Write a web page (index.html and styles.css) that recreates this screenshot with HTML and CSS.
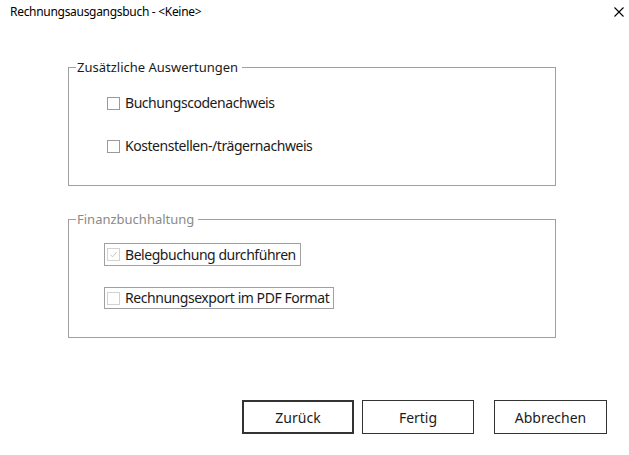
FILE: index.html
```html
<!DOCTYPE html>
<html lang="de">
<head>
<meta charset="utf-8">
<title>Rechnungsausgangsbuch</title>
<link rel="stylesheet" href="styles.css">
</head>
<body>
<div class="dialog">
  <div class="titlebar">
    <span class="title">Rechnungsausgangsbuch - &lt;Keine&gt;</span>
    <svg class="close" width="10" height="10" viewBox="0 0 10 10"><path d="M0.5 0.5L9.5 9.5M9.5 0.5L0.5 9.5" stroke="#000" stroke-width="1.1" fill="none"/></svg>
  </div>
  <div class="content">
    <fieldset class="group group-first">
      <legend class="legend">Zusätzliche Auswertungen</legend>
      <div class="row"><span class="box"></span><span class="label">Buchungscodenachweis</span></div>
      <div class="row"><span class="box"></span><span class="label">Kostenstellen-/trägernachweis</span></div>
    </fieldset>
    <fieldset class="group group-second">
      <legend class="legend legend-disabled">Finanzbuchhaltung</legend>
      <div class="row row-framed"><span class="box box-disabled"><svg width="11" height="11" viewBox="0 0 11 11"><path d="M2.5 5.8L4.6 7.8L8.6 3.2" stroke="#c4c4c4" stroke-width="1" fill="none"/></svg></span><span class="label">Belegbuchung durchführen</span></div>
      <div class="row row-framed row-short"><span class="box box-disabled"></span><span class="label">Rechnungsexport im PDF Format</span></div>
    </fieldset>
  </div>
  <div class="buttons">
    <button class="btn btn-default">Zurück</button>
    <button class="btn">Fertig</button>
    <button class="btn btn-cancel">Abbrechen</button>
  </div>
</div>
</body>
</html>
```
FILE: styles.css
```css
html, body {
  margin: 0;
  padding: 0;
  background: #ffffff;
}
body {
  width: 629px;
  height: 455px;
  overflow: hidden;
  font-family: "Noto Sans", "Open Sans", sans-serif;
  color: #1b1b1b;
}
.dialog {
  display: flex;
  flex-direction: column;
  height: 455px;
}
.titlebar {
  height: 24px;
  display: flex;
  align-items: center;
  justify-content: space-between;
  padding: 0 5px 0 10px;
}
.title {
  font-size: 12px;
  line-height: 16px;
  letter-spacing: -0.3px;
  color: #000;
}
.close {
  display: block;
}
.content {
  display: flex;
  flex-direction: column;
  padding-left: 68px;
  width: 488px;
}
.group {
  margin: 0;
  padding: 0 0 28px 0;
  border: 1px solid #a0a0a0;
  min-width: 0;
  display: flex;
  flex-direction: column;
}
.group-first {
  margin-top: 35px;
  padding-top: 17px;
  gap: 21px;
}
.group-second {
  margin-top: 25px;
  padding-top: 16px;
  gap: 21px;
}
.legend {
  font-size: 13px;
  line-height: 16px;
  padding: 0 4px 0 1px;
  margin-left: 7px;
  color: #1b1b1b;
}
.legend-disabled {
  color: #8a8a8a;
}
.row {
  display: flex;
  align-items: center;
  height: 22px;
  align-self: flex-start;
  margin-left: 38px;
}
.row-framed {
  border: 1px solid #a0a0a0;
  padding: 0 4px 0 2px;
  height: 21px;
  margin-left: 35px;
}
.row-short {
  height: 20px;
}
.box {
  width: 11px;
  height: 11px;
  border: 1px solid #9a9a9a;
  background: #fff;
  flex: none;
  display: flex;
  align-items: center;
  justify-content: center;
}
.box-disabled {
  border-color: #d2d2d2;
}
.box svg {
  display: block;
}
.label {
  font-size: 14px;
  line-height: 18px;
  margin-left: 5px;
  letter-spacing: -0.45px;
}
.buttons {
  display: flex;
  justify-content: flex-end;
  padding-right: 22px;
  margin-top: 62px;
}
.btn {
  font-family: "Noto Sans", "Open Sans", sans-serif;
  font-size: 14px;
  color: #1b1b1b;
  background: #fff;
  width: 112px;
  height: 34px;
  border: 1px solid #333;
  padding: 0;
  margin: 0 0 0 8px;
  box-sizing: border-box;
}
.btn-default {
  border: 2px solid #333;
}
.btn-cancel {
  margin-left: 20px;
  width: 113px;
}
```
